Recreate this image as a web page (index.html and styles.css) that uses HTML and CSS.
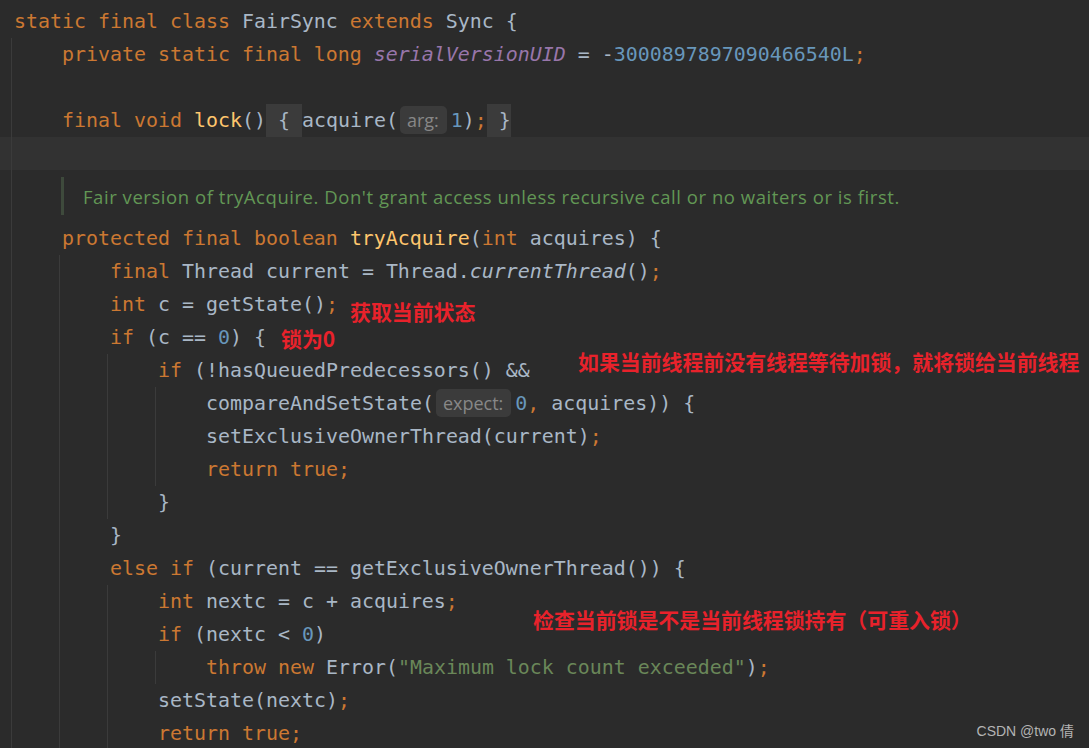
FILE: index.html
```html
<!DOCTYPE html>
<html lang="en">
<head>
<meta charset="utf-8">
<title>FairSync</title>
<link rel="stylesheet" href="styles.css">
</head>
<body>
<div class="page">
  <div class="code">
    <div class="ln"><span class="k">static final class</span> FairSync <span class="k">extends</span> Sync {</div>
    <div class="blk">
      <div class="ln"><span class="k">private static final long</span> <span class="f">serialVersionUID</span> = -<span class="n">3000897897090466540L</span><span class="p">;</span></div>
      <div class="ln"></div>
      <div class="ln"><span class="k">final void</span> <span class="fn">lock</span>()<span class="fold"> { </span>acquire(<span class="hint">arg:</span><span class="n">1</span>)<span class="p">;</span><span class="fold"> }</span></div>
      <div class="ln caret"></div>
      <div class="doc"><span class="doc-bar"></span><span class="doc-text">Fair version of tryAcquire. Don't grant access unless recursive call or no waiters or is first.</span></div>
      <div class="ln"><span class="k">protected final boolean</span> <span class="fn">tryAcquire</span>(<span class="k">int</span> acquires) {</div>
      <div class="blk">
        <div class="ln"><span class="k">final</span> Thread current = Thread.<span class="i">currentThread</span>()<span class="p">;</span></div>
        <div class="ln"><span class="k">int</span> c = getState()<span class="p">;</span></div>
        <div class="ln"><span class="k">if</span> (c == <span class="n">0</span>) {</div>
        <div class="blk">
          <div class="ln"><span class="k">if</span> (!hasQueuedPredecessors() &amp;&amp;</div>
          <div class="blk">
            <div class="ln">compareAndSetState(<span class="hint">expect:</span><span class="n">0</span><span class="p">,</span> acquires)) {</div>
            <div class="ln">setExclusiveOwnerThread(current)<span class="p">;</span></div>
            <div class="ln"><span class="k">return true</span><span class="p">;</span></div>
          </div>
          <div class="ln">}</div>
        </div>
        <div class="ln">}</div>
        <div class="ln"><span class="k">else if</span> (current == getExclusiveOwnerThread()) {</div>
        <div class="blk">
          <div class="ln"><span class="k">int</span> nextc = c + acquires<span class="p">;</span></div>
          <div class="ln"><span class="k">if</span> (nextc &lt; <span class="n">0</span>)</div>
          <div class="blk">
            <div class="ln"><span class="k">throw new</span> Error(<span class="s">"Maximum lock count exceeded"</span>)<span class="p">;</span></div>
          </div>
          <div class="ln">setState(nextc)<span class="p">;</span></div>
          <div class="ln"><span class="k">return true</span><span class="p">;</span></div>
        </div>
      </div>
    </div>
  </div>

  <div class="note note-state">获取当前状态</div>
  <div class="note note-zero">锁为0</div>
  <div class="note note-queue">如果当前线程前没有线程等待加锁，就将锁给当前线程</div>
  <div class="note note-reentrant">检查当前锁是不是当前线程锁持有（可重入锁）</div>

  <div class="watermark">CSDN @two 倩</div>
</div>
</body>
</html>
```

FILE: styles.css
```css
html, body {
  margin: 0;
  padding: 0;
  background: #2b2b2b;
}

body {
  width: 1089px;
  height: 748px;
  overflow: hidden;
}

.page {
  position: relative;
  width: 1089px;
  height: 748px;
  overflow: hidden;
}

.code {
  padding: 5px 0 0 14px;
  font-family: "DejaVu Sans Mono", "Liberation Mono", monospace;
  font-size: 19.93px;
  color: #a9b7c6;
}

.ln {
  height: 33px;
  line-height: 33px;
  white-space: pre;
}

.blk {
  margin-left: -3px;
  border-left: 1px solid #3b3b3b;
  padding-left: 50px;
}

.caret {
  margin-left: -62px;
  padding-left: 62px;
  background:
    linear-gradient(#3b3b3b, #3b3b3b) no-repeat 11px 0 / 1px 100%,
    #323232;
}

.k { color: #cc7832; }
.p { color: #cc7832; }
.fn { color: #ffc66d; }
.n { color: #6897bb; }
.s { color: #6a8759; }
.f { color: #9876aa; font-style: italic; }
.i { font-style: italic; }

.fold {
  display: inline-block;
  height: 33px;
  line-height: 33px;
  vertical-align: top;
  background: #3b3b3b;
  white-space: pre;
}

.hint {
  display: inline-block;
  height: 28px;
  line-height: 28px;
  margin: 2px 4px 0 2px;
  padding: 0 8px 0 7px;
  vertical-align: top;
  border-radius: 5px;
  background: #3b3b3b;
  color: #878787;
  font-family: "Open Sans", "Noto Sans", sans-serif;
  font-size: 18px;
}

.doc {
  display: flex;
  align-items: center;
  height: 52px;
}

.doc-bar {
  width: 3px;
  height: 38px;
  margin-left: -1px;
  background: #3e4a3c;
}

.doc-text {
  margin-left: 19px;
  color: #629755;
  font-family: "Open Sans", "Noto Sans", sans-serif;
  font-size: 18.5px;
  letter-spacing: 0.55px;
  white-space: nowrap;
}

.note {
  position: absolute;
  font-family: "Noto Sans CJK SC", sans-serif;
  font-weight: 700;
  font-size: 20.9px;
  line-height: 24px;
  color: #e8222b;
  white-space: nowrap;
}

.note-state { left: 350px; top: 299px; }
.note-zero { left: 281px; top: 326px; }
.note-queue { left: 578px; top: 349px; }
.note-reentrant { left: 533px; top: 607px; }

.watermark {
  position: absolute;
  right: 15px;
  top: 722px;
  font-family: "Liberation Sans", "Noto Sans CJK SC", sans-serif;
  font-size: 14px;
  line-height: 18px;
  color: #b4b4b4;
}
```
